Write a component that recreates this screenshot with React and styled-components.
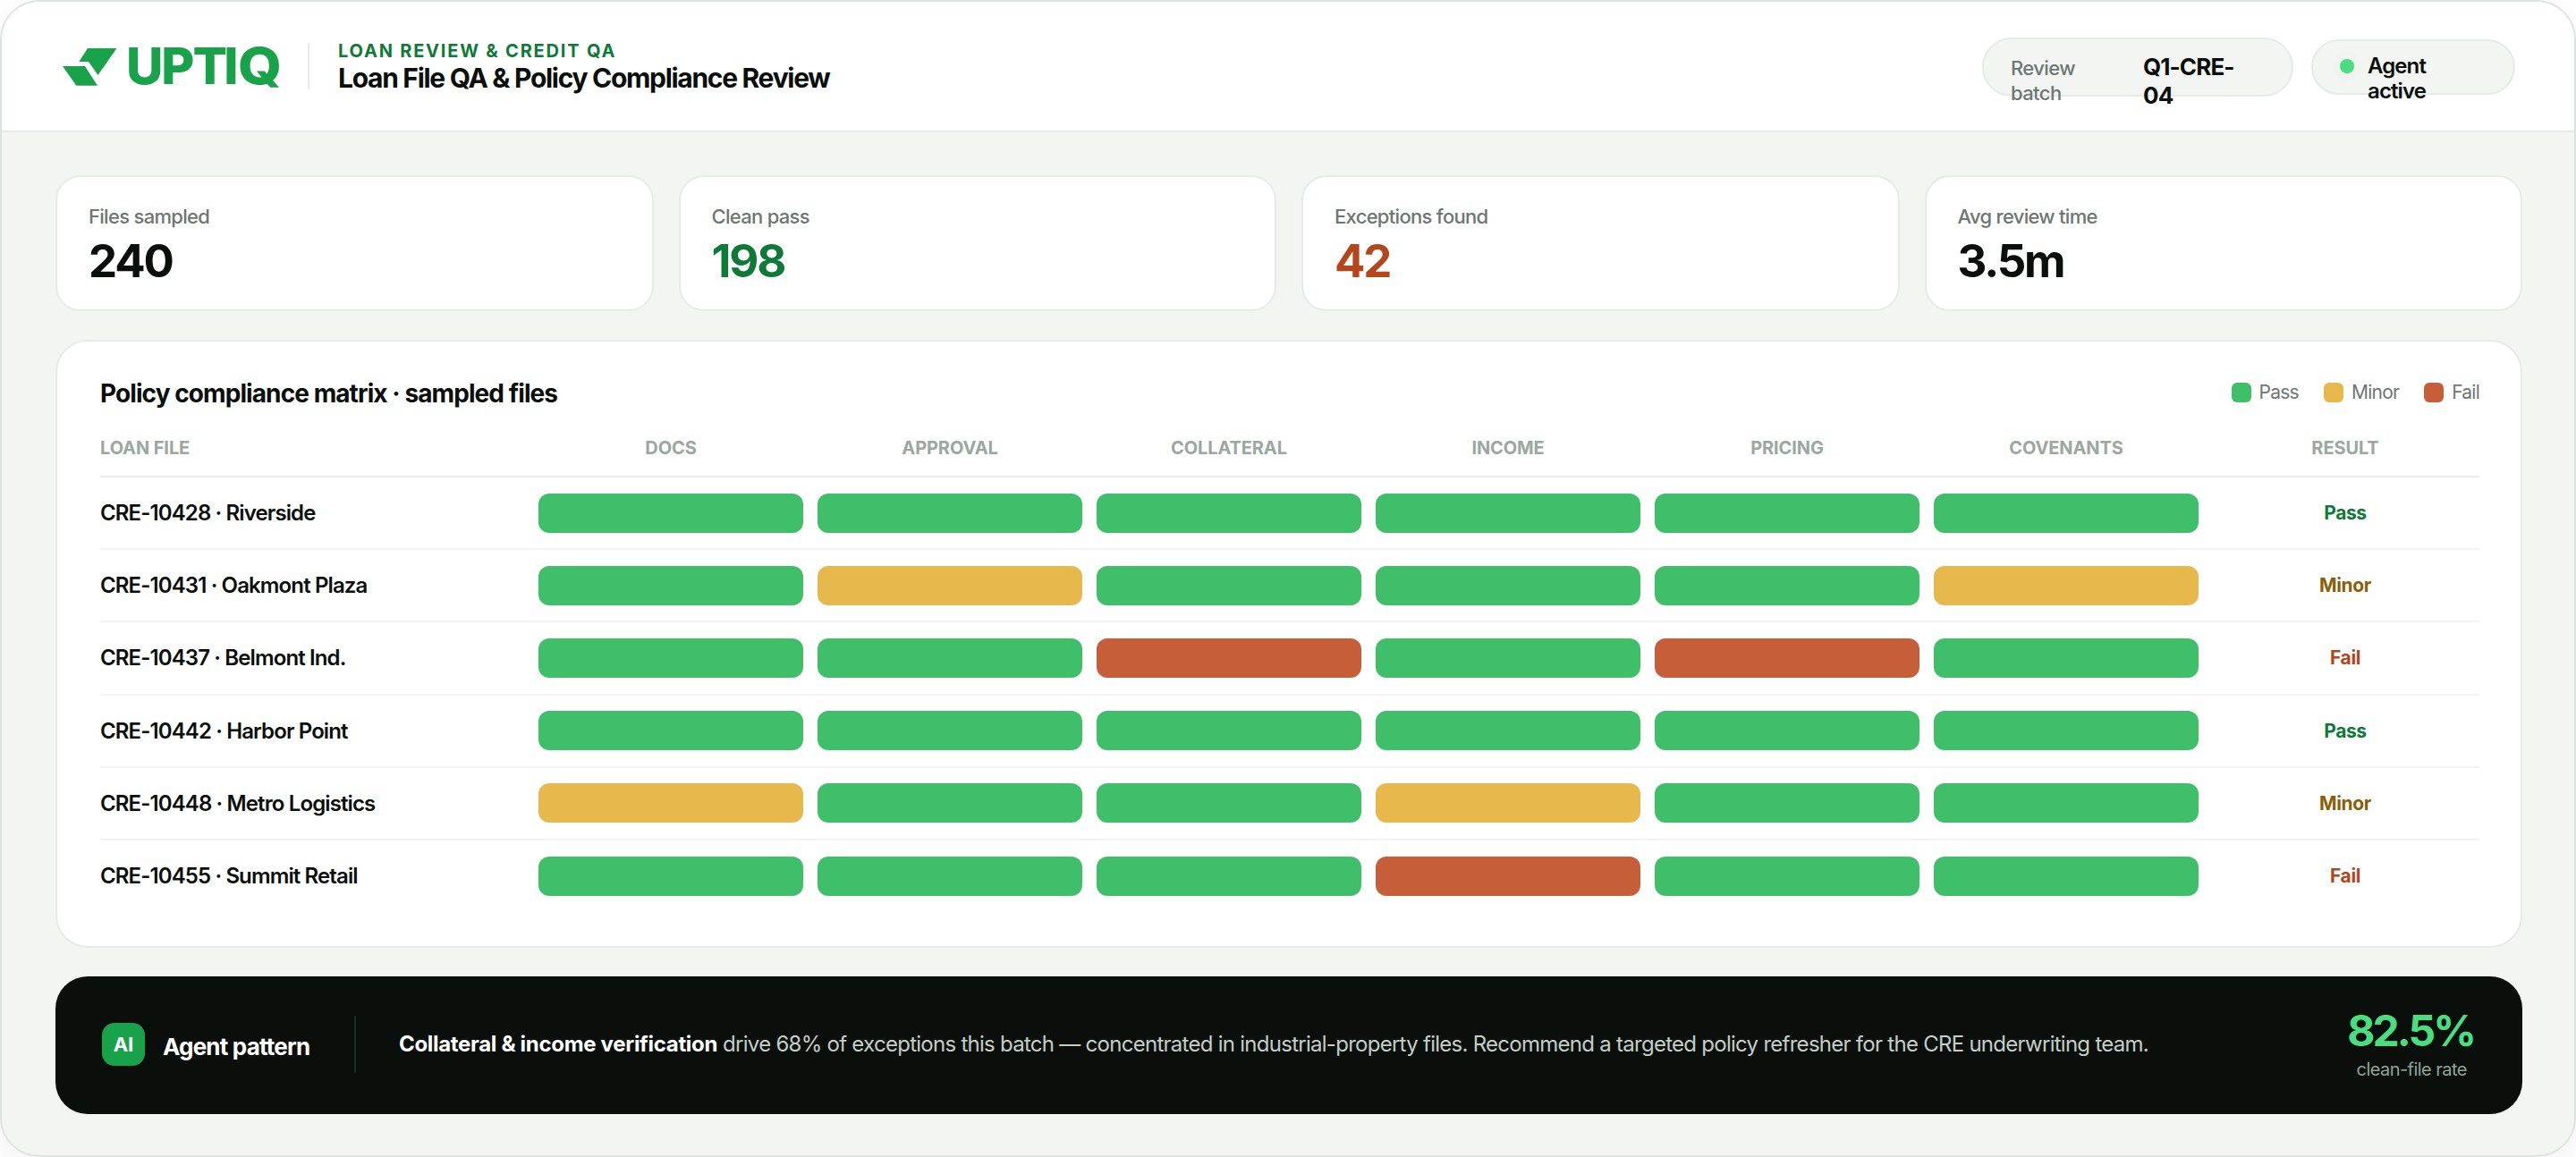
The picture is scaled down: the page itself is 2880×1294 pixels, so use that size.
import React from 'react';
import styled, { createGlobalStyle } from 'styled-components'

const columns = ['DOCS', 'APPROVAL', 'COLLATERAL', 'INCOME', 'PRICING', 'COVENANTS', 'RESULT']

const stats = [
    { label: 'Files sampled', value: '240', color: '#0a0f0c' },
    { label: 'Clean pass', value: '198', color: '#0f7a38' },
    { label: 'Exceptions found', value: '42', color: '#b5451b' },
    { label: 'Avg review time', value: '3.5m', color: '#0a0f0c' },
]

// p = pass, m = minor, f = fail
const files = [
    { name: 'CRE-10428 · Riverside', checks: 'pppppp', result: 'p' },
    { name: 'CRE-10431 · Oakmont Plaza', checks: 'pmpppm', result: 'm' },
    { name: 'CRE-10437 · Belmont Ind.', checks: 'ppfpfp', result: 'f' },
    { name: 'CRE-10442 · Harbor Point', checks: 'pppppp', result: 'p' },
    { name: 'CRE-10448 · Metro Logistics', checks: 'mppmpp', result: 'm' },
    { name: 'CRE-10455 · Summit Retail', checks: 'pppfpp', result: 'f' },
]

const status = {
    p: { label: 'Pass', fill: '#3fbf6a', text: '#0f7a38' },
    m: { label: 'Minor', fill: '#e7b84c', text: '#8a5f0c' },
    f: { label: 'Fail', fill: '#c65f39', text: '#b5451b' },
}

const Logo = () => (
    <LogoSvg viewBox="0 -10 250 80">
        <path d="M28 10H60.5L39.5 40L29 25H18.3Z" />
        <path d="M0 30H25L39 51.8H15.3Z" />
        <text x="71 110.3 145.4 180.2" y="50">UPTI</text>
        <text transform="translate(196 50) scale(1.1 1)">Q</text>
    </LogoSvg>
)

const App = () => {
    return (
        <>
            <GlobalStyle />
            <Frame>
                <Header>
                    <Logo />
                    <HeaderDivider />
                    <Titles>
                        <Eyebrow>LOAN REVIEW &amp; CREDIT QA</Eyebrow>
                        <Title>Loan File QA &amp; Policy Compliance Review</Title>
                    </Titles>
                    <Pills>
                        <BatchPill>
                            <span>Review batch</span>
                            <strong>Q1-CRE-04</strong>
                        </BatchPill>
                        <AgentPill>
                            <Dot />
                            <strong>Agent active</strong>
                        </AgentPill>
                    </Pills>
                </Header>
                <Content>
                    <Stats>
                        {stats.map((stat) => (
                            <StatCard key={stat.label}>
                                <StatLabel>{stat.label}</StatLabel>
                                <StatValue $color={stat.color}>{stat.value}</StatValue>
                            </StatCard>
                        ))}
                    </Stats>
                    <Matrix>
                        <MatrixTop>
                            <h2>Policy compliance matrix · sampled files</h2>
                            <Legend>
                                {Object.values(status).map((item) => (
                                    <LegendItem key={item.label} $color={item.fill}>{item.label}</LegendItem>
                                ))}
                            </Legend>
                        </MatrixTop>
                        <HeadRow>
                            <span>LOAN FILE</span>
                            {columns.map((column) => <span key={column}>{column}</span>)}
                        </HeadRow>
                        {files.map((file) => (
                            <Row key={file.name}>
                                <FileName>{file.name}</FileName>
                                {file.checks.split('').map((check, i) => (
                                    <Bar key={i} $color={status[check].fill} />
                                ))}
                                <Result $color={status[file.result].text}>{status[file.result].label}</Result>
                            </Row>
                        ))}
                    </Matrix>
                    <Agent>
                        <AgentBadge>AI</AgentBadge>
                        <AgentTitle>Agent pattern</AgentTitle>
                        <AgentDivider />
                        <AgentText>
                            <b>Collateral &amp; income verification</b> drive 68% of exceptions this batch — concentrated in industrial-property files. Recommend a targeted policy refresher for the CRE underwriting team.
                        </AgentText>
                        <Rate>
                            <b>82.5%</b>
                            <span>clean-file rate</span>
                        </Rate>
                    </Agent>
                </Content>
            </Frame>
        </>
    );
}

const GlobalStyle = createGlobalStyle`
    *{
        box-sizing: border-box;
    }
    body{
        margin: 0;
        background: white;
        color: #0a0f0c;
        font-family: Inter, sans-serif;
        -webkit-font-smoothing: antialiased;
    }
`

const Frame = styled.div`
    height: 1294px;
    border: 2px solid #dde3df;
    border-radius: 44px;
    background: #f3f5f3;
    box-shadow: 0 16px 48px rgba(10, 15, 12, 0.06);
    overflow: hidden;
`

const Header = styled.header`
    height: 146px;
    display: flex;
    align-items: center;
    padding: 0 66px 0 68px;
    background: white;
    border-bottom: 2px solid #e6eae8;
`

const LogoSvg = styled.svg`
    width: 250px;
    height: 80px;
    fill: #18a34a;
    font-size: 57px;
    font-weight: 800;
`

const HeaderDivider = styled.div`
    width: 2px;
    height: 52px;
    margin: 0 32px 0 24px;
    background: #e6eae8;
`

const Titles = styled.div`
    display: flex;
    flex-direction: column;
    padding-top: 1px;
    white-space: nowrap;
`

const Eyebrow = styled.span`
    color: #0f7a38;
    font-size: 20px;
    line-height: 24px;
    font-weight: 700;
    letter-spacing: 1.8px;
`

const Title = styled.h1`
    margin: 0;
    font-size: 30px;
    line-height: 36px;
    font-weight: 700;
    letter-spacing: -1.3px;
`

const Pills = styled.div`
    display: flex;
    align-items: center;
    gap: 20px;
    margin: 2px 0 0 auto;
`

const Pill = styled.div`
    display: flex;
    align-items: flex-start;
    border: 2px solid #e6eae8;
    border-radius: 33px;
    background: #f3f5f3;
`

const BatchPill = styled(Pill)`
    width: 348px;
    height: 66px;
    padding: 15px 30px 0;
    span{
        width: 100px;
        margin-right: 48px;
        padding-top: 3px;
        color: #6b7770;
        font-size: 22px;
        line-height: 28px;
        font-weight: 500;
        letter-spacing: -0.6px;
    }
    strong{
        width: 120px;
        font-size: 26px;
        line-height: 32px;
        font-weight: 700;
        letter-spacing: -0.9px;
    }
`

const AgentPill = styled(Pill)`
    width: 228px;
    height: 62px;
    padding: 14px 30px 0;
    strong{
        width: 90px;
        font-size: 24px;
        line-height: 28px;
        font-weight: 600;
        letter-spacing: -0.9px;
    }
`

const Dot = styled.span`
    width: 16px;
    height: 16px;
    margin: 6px 15px 0 0;
    border-radius: 50%;
    background: #4ade80;
    box-shadow: 0 0 0 8px rgba(74, 222, 128, 0.02);
`

const Content = styled.main`
    display: flex;
    flex-direction: column;
    gap: 32px;
    padding: 48px 58px 0 60px;
`

const Stats = styled.section`
    display: grid;
    grid-template-columns: repeat(4, 1fr);
    gap: 28px;
`

const StatCard = styled.div`
    height: 152px;
    padding: 30px 35px 0;
    border: 2px solid #e6eae8;
    border-radius: 28px;
    background: white;
`

const StatLabel = styled.div`
    color: #6b7770;
    font-size: 22px;
    line-height: 28px;
    font-weight: 500;
    letter-spacing: -0.7px;
`

const StatValue = styled.div`
    margin-top: 6px;
    color: ${(props) => props.$color};
    font-size: 51px;
    line-height: 60px;
    font-weight: 700;
    letter-spacing: -2.2px;
`

const Matrix = styled.section`
    height: 680px;
    padding: 40px 46px 0 48px;
    border: 2px solid #e6eae8;
    border-radius: 36px;
    background: white;
`

const MatrixTop = styled.div`
    height: 36px;
    display: flex;
    justify-content: space-between;
    h2{
        margin: 0;
        font-size: 28px;
        line-height: 37px;
        font-weight: 700;
        letter-spacing: -0.92px;
    }
`

const Legend = styled.div`
    display: flex;
    gap: 28px;
`

const LegendItem = styled.span`
    display: flex;
    gap: 9px;
    color: #6b7770;
    font-size: 21px;
    line-height: 33px;
    letter-spacing: -0.75px;
    &::before{
        content: '';
        width: 22px;
        height: 22px;
        margin-top: 6px;
        border-radius: 6px;
        background: ${(props) => props.$color};
    }
`

const Grid = styled.div`
    display: grid;
    grid-template-columns: 474px repeat(7, 1fr);
    gap: 16px;
    align-items: center;
    padding-right: 2px;
`

const HeadRow = styled(Grid)`
    height: 76px;
    padding-top: 12px;
    border-bottom: 2px solid #e9eeeb;
    color: #9aa8a0;
    font-size: 20px;
    font-weight: 700;
    letter-spacing: -0.1px;
    text-align: center;
    span:first-child{
        text-align: left;
    }
`

const Row = styled(Grid)`
    height: 81.2px;
    border-bottom: 2px solid #f2f4f3;
    &:last-child{
        border-bottom-color: transparent;
    }
`

const FileName = styled.span`
    font-size: 24px;
    font-weight: 600;
    letter-spacing: -0.88px;
    white-space: nowrap;
`

const Bar = styled.span`
    height: 44px;
    border-radius: 12px;
    background: ${(props) => props.$color};
`

const Result = styled.span`
    color: ${(props) => props.$color};
    font-size: 21px;
    font-weight: 700;
    letter-spacing: -0.4px;
    text-align: center;
`

const Agent = styled.section`
    height: 154px;
    display: flex;
    align-items: center;
    padding: 0 54px 0 52px;
    border-radius: 36px;
    background: #0a0f0c;
    color: white;
    white-space: nowrap;
`

const AgentBadge = styled.span`
    width: 48px;
    height: 48px;
    flex-shrink: 0;
    margin-top: -2px;
    border-radius: 14px;
    background: #18a34a;
    font-size: 22px;
    line-height: 48px;
    font-weight: 700;
    text-align: center;
`

const AgentTitle = styled.span`
    width: 214px;
    flex-shrink: 0;
    margin-left: 20px;
    padding-top: 3px;
    font-size: 26px;
    font-weight: 700;
    letter-spacing: -0.8px;
`

const AgentDivider = styled.span`
    width: 2px;
    height: 64px;
    flex-shrink: 0;
    margin: -2px 48px 0 0;
    background: #1f2a24;
`

const AgentText = styled.p`
    margin: -2px 0 0;
    color: #c3cec7;
    font-size: 24px;
    line-height: 36px;
    letter-spacing: -0.73px;
    b{
        color: white;
        font-weight: 700;
        letter-spacing: -0.31px;
    }
`

const Rate = styled.div`
    display: flex;
    flex-direction: column;
    align-items: center;
    margin: -1px 0 0 auto;
    b{
        color: #4ade80;
        font-size: 48px;
        line-height: 55px;
        font-weight: 700;
        letter-spacing: -3px;
    }
    span{
        padding-left: 2px;
        color: #93a39a;
        font-size: 20px;
        line-height: 33px;
        letter-spacing: -0.55px;
    }
`

export default App;
